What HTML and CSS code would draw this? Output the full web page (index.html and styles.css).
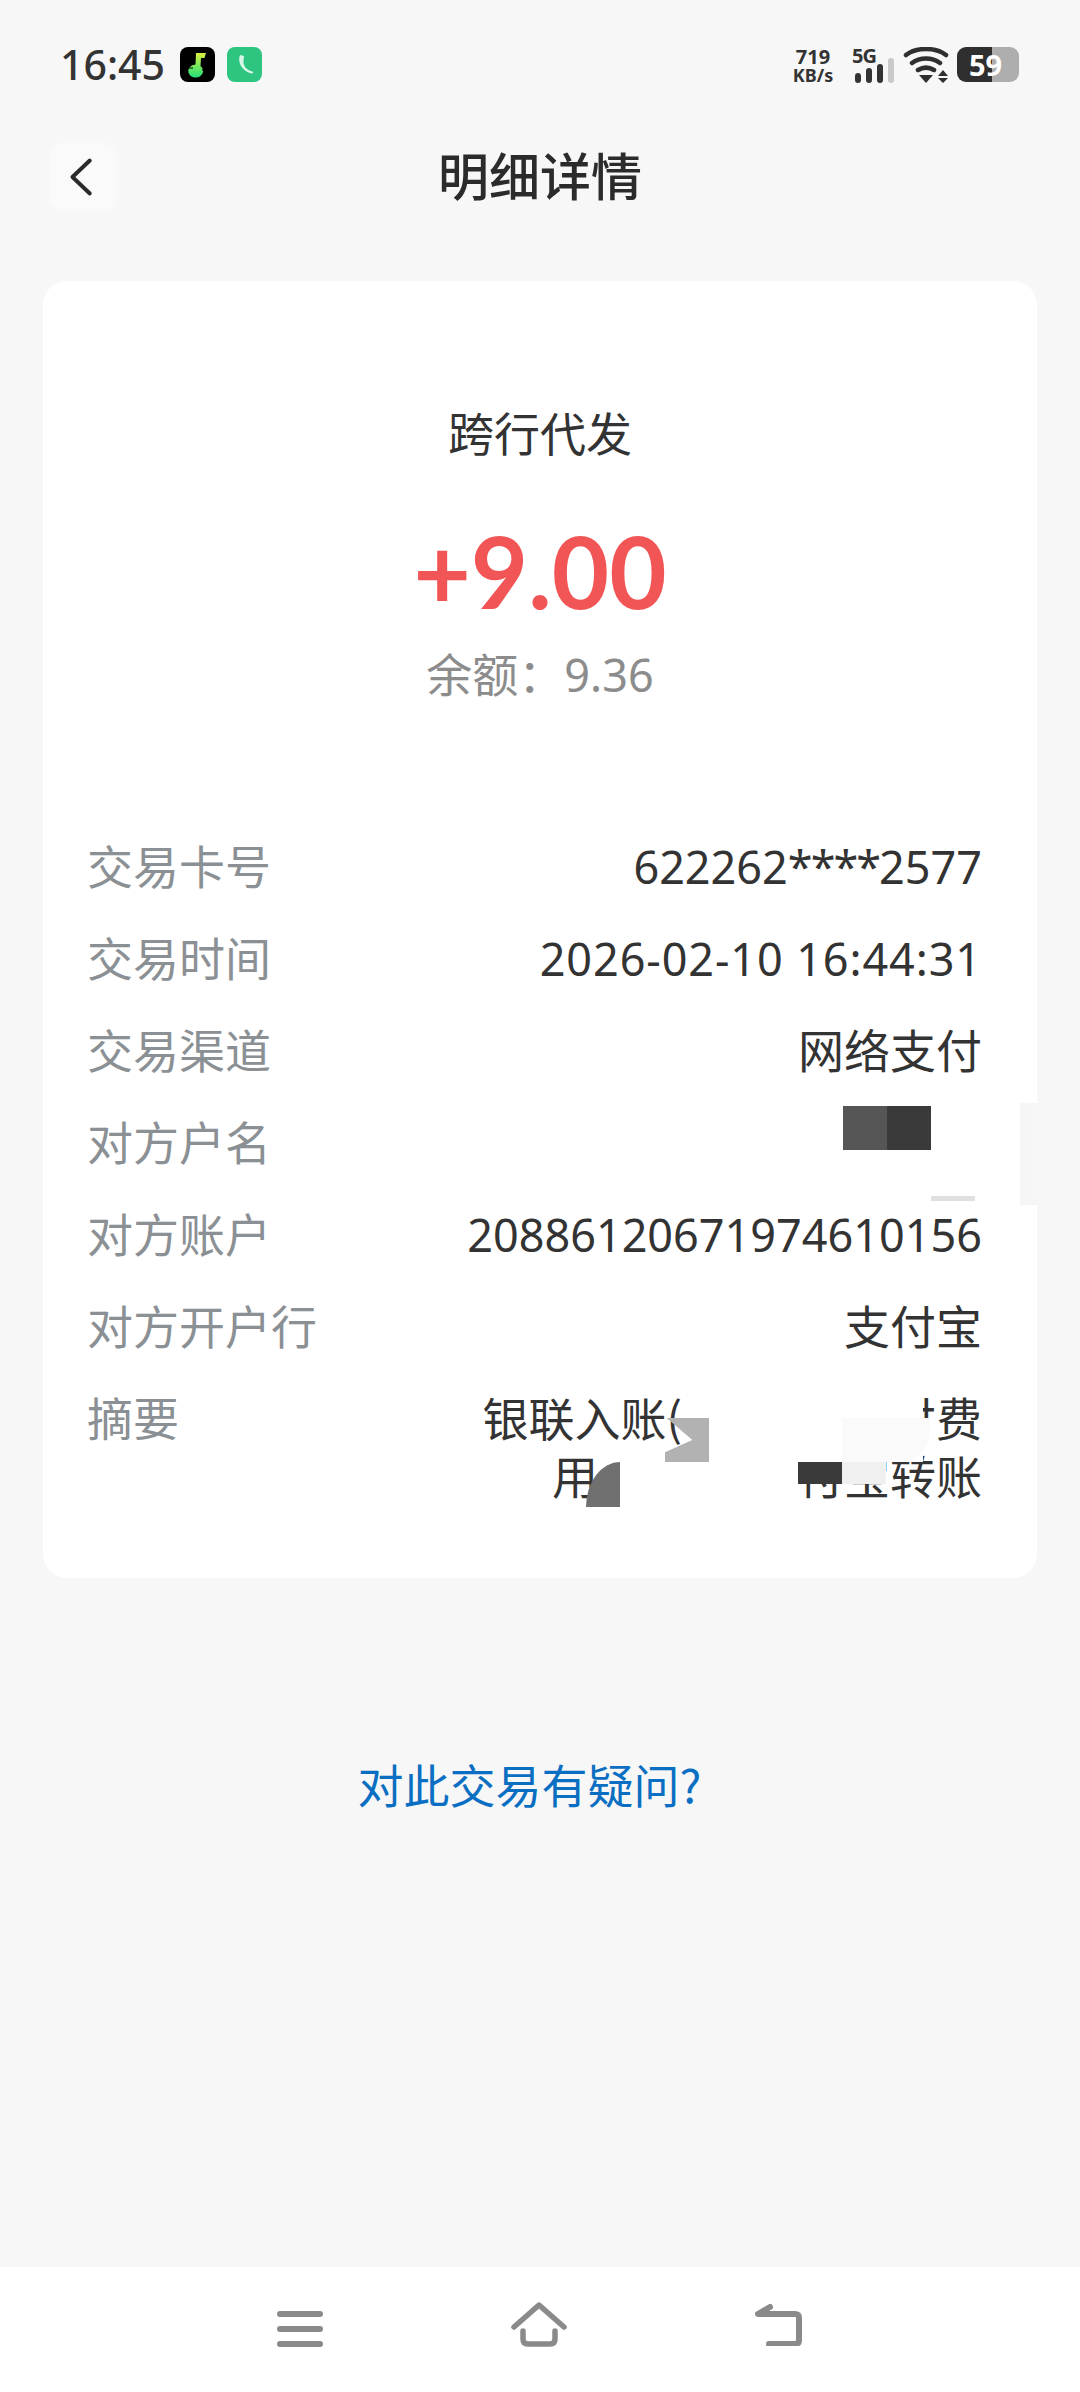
FILE: index.html
```html
<!DOCTYPE html>
<html lang="zh-CN">
<head>
    <meta charset="UTF-8">
    <meta name="viewport" content="width=device-width, initial-scale=1.0">
    <title>明细详情</title>
    <link rel="stylesheet" href="styles.css">
</head>
<body>
    <div class="status-bar">
        <span class="clock">16:45</span>
        <svg class="app-icon" viewBox="0 0 35 35">
            <defs>
                <linearGradient id="noteGrad" x1="0" y1="0" x2="0" y2="1">
                    <stop offset="0" stop-color="#d8ef3c"/>
                    <stop offset="1" stop-color="#22e07a"/>
                </linearGradient>
            </defs>
            <rect width="35" height="35" rx="8" fill="#000"/>
            <path d="M16 6h10l-1.500 5h-3.500l-.5 8a7.500 6.500 0 1 1-5-1.500z" fill="url(#noteGrad)"/>
            <path d="M7 21h6M22 23h6" stroke="#000" stroke-width="1"/>
        </svg>
        <svg class="app-icon" viewBox="0 0 35 35">
            <rect width="35" height="35" rx="8" fill="#2ec581"/>
            <path d="M13 8c-2.500 6 .5 15 11 18.500 1 .3 2-.5 2.500-1.500l-4-1.500c-4-1.500-6.500-6-6-10L17 9z" fill="#d9f7e8"/>
        </svg>
        <div class="status-right">
            <div class="speed"><span class="speed-num">719</span><span class="speed-unit">KB/s</span></div>
            <div class="signal">
                <span class="signal-label">5G</span>
                <div class="bars">
                    <i class="bar bar-1"></i>
                    <i class="bar bar-2"></i>
                    <i class="bar bar-3"></i>
                    <i class="bar bar-4"></i>
                </div>
            </div>
            <svg class="wifi" viewBox="0 0 46 36">
                <path d="M3 8C13 0 33 0 43 8M9 16c8-6 20-6 28 0M15 23c5-3 11-3 16 0" fill="none" stroke="#2f2f2f" stroke-width="4.500" stroke-linecap="round"/>
                <path d="M16 28h14l-7 8zM35 29l5-6 5 6zM35 31h10l-5 5z" fill="#2f2f2f"/>
            </svg>
            <div class="battery"><span class="battery-num">59</span></div>
        </div>
    </div>

    <div class="title-bar">
        <div class="back-btn">
            <svg viewBox="0 0 30 44" class="back-icon">
                <path d="M24 3L4 22l20 19" fill="none" stroke="#2a2a2a" stroke-width="4.500" stroke-linecap="round" stroke-linejoin="round"/>
            </svg>
        </div>
        <h1>明细详情</h1>
    </div>

    <div class="card">
        <div class="trade-type">跨行代发</div>
        <div class="amount">+9.00</div>
        <div class="balance">余额：<span class="balance-num">9.36</span></div>

        <div class="rows">
            <div class="row">
                <span class="label">交易卡号</span>
                <span class="value num">622262<span class="stars">****</span>2577</span>
            </div>
            <div class="row">
                <span class="label">交易时间</span>
                <span class="value num time">2026-02-10 16:44:31</span>
            </div>
            <div class="row">
                <span class="label">交易渠道</span>
                <span class="value">网络支付</span>
            </div>
            <div class="row">
                <span class="label">对方户名</span>
                <span class="name-mask"><i class="mask-mid"></i><i class="mask-dark"></i></span>
            </div>
            <div class="row">
                <span class="label">对方账户</span>
                <span class="value num">20886120671974610156</span>
            </div>
            <div class="row">
                <span class="label">对方开户行</span>
                <span class="value">支付宝</span>
            </div>
            <div class="row">
                <span class="label">摘要</span>
                <div class="summary">
                    <div class="summary-line">银联入账(<span class="gap gap-1"></span>付费</div>
                    <div class="summary-line">用<span class="gap gap-2"></span>付宝转账</div>
                </div>
            </div>
        </div>

        <!-- mosaic blocks left over the redacted text -->
        <i class="patch patch-line"></i>
        <i class="patch patch-side"></i>
        <i class="patch patch-notch"></i>
        <i class="patch patch-quarter"></i>
        <i class="patch patch-blank"></i>
        <i class="patch patch-fade"></i>
        <i class="patch patch-ink"></i>
        <i class="patch patch-pale"></i>
    </div>

    <div class="link">对此交易有疑问?</div>

    <div class="nav-bar">
        <svg class="nav-menu" viewBox="0 0 46 38">
            <path d="M3 4h40M3 19h40M3 34h40" fill="none" stroke="#8a8a8a" stroke-width="6" stroke-linecap="round"/>
        </svg>
        <svg class="nav-home" viewBox="0 0 56 46">
            <path d="M3 25L28 3l25 22" fill="none" stroke="#8a8a8a" stroke-width="5.500" stroke-linecap="round" stroke-linejoin="round"/>
            <path d="M12 29v8q0 5 5 5h22q5 0 5-5v-8" fill="none" stroke="#8a8a8a" stroke-width="5.500" stroke-linecap="round"/>
        </svg>
        <svg class="nav-back" viewBox="0 0 48 42">
            <path d="M15 3L3 10h37q4 0 4 4v22q0 4-4 4H14" fill="none" stroke="#8a8a8a" stroke-width="6" stroke-linecap="round" stroke-linejoin="round"/>
        </svg>
    </div>
</body>
</html>
```

FILE: styles.css
```css
html, body {
    margin: 0;
    padding: 0;
}
body {
    width: 1080px;
    height: 2392px;
    position: relative;
    overflow: hidden;
    background-color: #f7f7f7;
    color: #333;
    font-family: "Noto Sans", "Noto Sans CJK SC", sans-serif;
}

/* status bar */
.status-bar {
    height: 130px;
    box-sizing: border-box;
    padding: 47px 61px 0 60px;
    display: flex;
    align-items: flex-start;
}
.clock {
    font-size: 41px;
    font-weight: 500;
    line-height: 35px;
    width: 120px;
    color: #333;
}
.app-icon {
    width: 35px;
    height: 35px;
    margin-right: 12px;
}
.status-right {
    margin-left: auto;
    display: flex;
    align-items: flex-start;
}
.speed {
    width: 44px;
    display: flex;
    flex-direction: column;
    align-items: center;
    font-weight: 700;
    color: #333;
}
.speed-num {
    font-size: 20px;
    line-height: 20px;
}
.speed-unit {
    font-size: 18px;
    line-height: 17px;
}
.signal {
    width: 44px;
    margin-left: 17px;
    display: flex;
    flex-direction: column;
}
.signal-label {
    font-size: 20px;
    line-height: 17px;
    font-weight: 700;
    color: #333;
    letter-spacing: -1px;
}
.bars {
    display: flex;
    align-items: flex-end;
    gap: 5px;
    height: 25px;
    margin-top: -6px;
    margin-left: 3px;
}
.bar {
    display: block;
    width: 6px;
    flex: none;
    border-radius: 3px;
    background-color: #333;
}
.bar-1 { height: 10px; }
.bar-2 { height: 15px; }
.bar-3 { height: 19px; }
.bar-4 { height: 25px; background-color: #c9c9c9; }
.wifi {
    width: 46px;
    height: 36px;
    margin-left: 7px;
}
.battery {
    width: 62px;
    height: 35px;
    margin-left: 8px;
    border-radius: 9px;
    background: linear-gradient(to right, #2f2f2f 0, #2f2f2f 35px, #aeaeae 35px);
    display: flex;
    justify-content: flex-start;
}
.battery-num {
    margin-left: 12px;
    font-size: 29px;
    line-height: 35px;
    font-weight: 700;
    color: #fff;
}

/* title */
.title-bar {
    height: 94px;
    position: relative;
    display: flex;
    align-items: center;
    justify-content: center;
}
.back-btn {
    position: absolute;
    left: 50px;
    top: 14px;
    width: 66px;
    height: 66px;
    border-radius: 14px;
    background-color: #fafafa;
    box-shadow: 0 0 8px #fafafa;
    display: flex;
    align-items: center;
    justify-content: center;
}
.back-icon {
    width: 26px;
    height: 44px;
    margin-left: -2px;
}
h1 {
    margin: -6px 0 0;
    font-size: 51px;
    font-weight: 500;
    line-height: 60px;
    color: #2b2b2b;
    font-family: "Noto Sans CJK SC", sans-serif;
}

/* card */
.card {
    position: relative;
    box-sizing: border-box;
    width: 994px;
    height: 1297px;
    margin: 57px 0 0 43px;
    padding-top: 121px;
    background-color: #fff;
    border-radius: 24px;
    text-align: center;
}
.trade-type {
    font-size: 46px;
    line-height: 58px;
    font-family: "Noto Sans CJK SC", sans-serif;
    color: #333;
}
.amount {
    margin-top: 56px;
    font-size: 99px;
    line-height: 110px;
    font-weight: 700;
    font-family: Lato, "Noto Sans", sans-serif;
    color: #f25555;
}
.balance {
    margin-top: 17px;
    font-size: 46px;
    line-height: 58px;
    color: #8c8c8c;
    font-family: "Noto Sans CJK SC", sans-serif;
}
.balance-num {
    font-family: "Noto Sans", sans-serif;
    font-size: 45px;
}
.rows {
    margin-top: 131px;
    padding: 0 55px 0 44px;
    display: flex;
    flex-direction: column;
    gap: 34px;
}
.row {
    display: flex;
    justify-content: space-between;
    min-height: 58px;
    font-size: 46px;
    line-height: 58px;
    font-family: "Noto Sans CJK SC", sans-serif;
}
.label {
    color: #8b9095;
}
.value {
    color: #333;
}
.num {
    height: 58px;
    line-height: 64px;
    font-family: "Noto Sans", sans-serif;
    font-size: 45px;
}
.stars {
    letter-spacing: -2px;
}
.time {
    letter-spacing: 0.9px;
}
.name-mask {
    display: flex;
    height: 44px;
    margin: -5px 51px 0 0;
}
.name-mask i {
    display: block;
    width: 44px;
    height: 44px;
}
.mask-mid { background-color: #555; }
.mask-dark { background-color: #3a3a3a; }
.summary {
    color: #333;
}
.summary-line {
    display: flex;
    justify-content: flex-end;
}
.gap { display: block; }
.gap-1 { width: 208px; }
.gap-2 { width: 200px; }

/* mosaic patches, card coordinates */
.patch {
    position: absolute;
    display: block;
}
.patch-line {
    left: 888px;
    top: 915px;
    width: 44px;
    height: 5px;
    background-color: #e0e0e0;
}
.patch-side {
    left: 977px;
    top: 822px;
    width: 17px;
    height: 102px;
    background-color: #f6f6f6;
}
.patch-notch {
    left: 622px;
    top: 1137px;
    width: 44px;
    height: 44px;
    background-color: #b2b2b2;
    clip-path: polygon(0 0, 100% 0, 100% 100%, 0 100%, 0 78%, 62% 50%, 4% 0);
}
.patch-quarter {
    left: 543px;
    top: 1181px;
    width: 34px;
    height: 45px;
    background-color: #707070;
    border-top-left-radius: 100% 100%;
}
.patch-blank {
    left: 755px;
    top: 1093px;
    width: 125px;
    height: 88px;
    background-color: #fff;
}
.patch-fade {
    left: 799px;
    top: 1137px;
    width: 88px;
    height: 44px;
    background-color: #fafafa;
    border-bottom-right-radius: 30px;
}
.patch-ink {
    left: 755px;
    top: 1181px;
    width: 44px;
    height: 22px;
    background-color: #3a3a3a;
}
.patch-pale {
    left: 799px;
    top: 1181px;
    width: 44px;
    height: 22px;
    background-color: #f0f0f0;
}

/* link */
.link {
    margin-top: 175px;
    padding-right: 21px;
    text-align: center;
    font-size: 46px;
    line-height: 60px;
    color: #0a6fc2;
    font-family: "Noto Sans CJK SC", sans-serif;
}

/* bottom nav */
.nav-bar {
    position: absolute;
    left: 0;
    right: 0;
    bottom: 0;
    height: 125px;
    box-sizing: border-box;
    padding: 35px 0 0 277px;
    background-color: #fff;
    display: flex;
    align-items: flex-start;
    gap: 188px;
}
.nav-menu {
    width: 46px;
    height: 38px;
    margin-top: 8px;
}
.nav-home {
    width: 56px;
    height: 46px;
}
.nav-back {
    width: 48px;
    height: 42px;
    margin-top: 2px;
}
```
